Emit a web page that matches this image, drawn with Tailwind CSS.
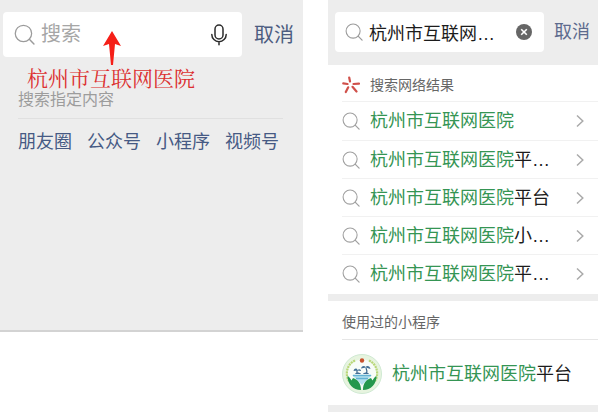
<!DOCTYPE html>
<html lang="zh-CN">
<head>
<meta charset="utf-8">
<meta name="viewport" content="width=device-width, initial-scale=1">
<title>搜索</title>
<script src="https://cdn.jsdelivr.net/npm/@tailwindcss/browser@4"></script>
</head>
<body class="bg-white font-['Liberation_Sans','Noto_Sans_CJK_SC',sans-serif] text-lg leading-6 text-[#1c1c1c]">
<svg class="hidden" aria-hidden="true">
  <symbol id="search" viewBox="0 0 20 20"><circle cx="9" cy="9" r="7.8" fill="none" stroke="currentColor" stroke-width="1.2"/><path d="M14.6 14.6 19 19" fill="none" stroke="currentColor" stroke-width="1.4" stroke-linecap="round"/></symbol>
  <symbol id="chevron" viewBox="0 0 8 14"><path d="M1 1.500 6.800 7 1 12.500" fill="none" stroke="currentColor" stroke-width="1.5"/></symbol>
</svg>
<main class="grid grid-cols-[minmax(0,303fr)_minmax(0,270fr)] items-start gap-x-[25px] pr-[2px]">
  <section class="border-b-2 border-[#d3d3d3] bg-[#ededed] pt-3 pb-[176px]">
    <form class="flex items-center pr-[9px] pl-[3px]">
      <div class="relative flex h-[45px] min-w-0 flex-1 items-center rounded bg-white pr-3 pl-[11px]">
        <svg class="size-[21px] shrink-0 text-[#9b9b9b]" aria-hidden="true"><use href="#search"/></svg>
        <input type="text" aria-label="搜索" placeholder="搜索" class="ml-[6px] h-8 min-w-0 flex-1 text-xl outline-none placeholder:text-[#a6a6a6]">
        <button type="button" aria-label="语音输入" class="shrink-0">
          <svg class="h-6 w-[22px]" viewBox="0 0 22 24" fill="none" stroke="#2b2b2b" stroke-width="1.5" stroke-linecap="round"><rect x="7" y="2" width="8" height="14" rx="4"/><path d="M3.8 11.5a7.2 7.2 0 0 0 14.4 0M11 18.8v3"/></svg>
        </button>
        <svg class="absolute top-[19px] left-[100px] h-[35px] w-[18px]" viewBox="0 0 18 35" aria-hidden="true"><path d="M9 0 18 15 12 13 10 34H8L6 13 0 15Z" fill="#f51f18"/></svg>
      </div>
      <button type="button" class="ml-3 shrink-0 text-xl text-[#4c5c80]">取消</button>
    </form>
    <p class="mt-2 pl-[27px] font-['Noto_Serif_CJK_SC','Noto_Sans_CJK_SC',serif] text-[21px] leading-6 text-[#dc3030]">杭州市互联网医院</p>
    <div class="pr-5 pl-[18px]">
      <h2 class="border-b border-[#e0e0e0] pt-[1px] pb-2 text-base leading-[20px] text-[#9c9c9c]">搜索指定内容</h2>
      <nav class="mt-[11px] flex gap-[15px] whitespace-nowrap text-[#465a84]">
        <a href="#moments">朋友圈</a>
        <a href="#accounts">公众号</a>
        <a href="#mini">小程序</a>
        <a href="#channels">视频号</a>
      </nav>
    </div>
  </section>

  <section>
    <form class="flex items-center bg-[#ededed] pt-3 pr-2 pb-[13px] pl-[7px]">
      <div class="flex h-10 min-w-0 flex-1 items-center rounded bg-white pr-3 pl-[10px]">
        <svg class="size-[18px] shrink-0 text-[#9b9b9b]" aria-hidden="true"><use href="#search"/></svg>
        <input type="text" aria-label="搜索内容" value="杭州市互联网…" class="ml-[6px] h-8 min-w-0 flex-1 outline-none">
        <button type="button" aria-label="清除" class="shrink-0">
          <svg class="size-4" viewBox="0 0 16 16"><circle cx="8" cy="8" r="8" fill="#666"/><path d="m5.2 5.2 5.6 5.6m0-5.6-5.6 5.6" stroke="#fff" stroke-width="1.6"/></svg>
        </button>
      </div>
      <button type="button" class="ml-[10px] shrink-0 text-[#5d6b8e]">取消</button>
    </form>
    <div class="pl-[14px]">
      <h2 class="flex h-[37px] items-center gap-[10px] border-b border-[#f1f1f1] pt-1 text-sm text-[#666]">
        <svg class="size-[18px]" viewBox="0 0 18 18" fill="none" stroke="#d0504a" stroke-width="2.2" stroke-linecap="round" aria-hidden="true"><path d="M7.200 1.500 8 5.500M1.300 7.300 5.500 8M11.500 8 17 7.600M6.200 11.300 3.800 16M10.500 10.800 14.500 15.500"/></svg>
        搜索网络结果
      </h2>
      <ul class="divide-y divide-[#f1f1f1] text-[#359554]">
        <li><a href="#r1" class="flex h-[38px] items-center pr-[14px]"><svg class="mr-[10px] size-[18px] shrink-0 text-[#a0a0a0]" aria-hidden="true"><use href="#search"/></svg><span class="flex-1 whitespace-nowrap">杭州市互联网医院</span><svg class="h-[14px] w-2 text-[#aaa]" aria-hidden="true"><use href="#chevron"/></svg></a></li>
        <li><a href="#r2" class="flex h-[37px] items-center pr-[14px]"><svg class="mr-[10px] size-[18px] shrink-0 text-[#a0a0a0]" aria-hidden="true"><use href="#search"/></svg><span class="flex-1 whitespace-nowrap">杭州市互联网医院<span class="text-[#1c1c1c]">平…</span></span><svg class="h-[14px] w-2 text-[#aaa]" aria-hidden="true"><use href="#chevron"/></svg></a></li>
        <li><a href="#r3" class="flex h-[37px] items-center pr-[14px]"><svg class="mr-[10px] size-[18px] shrink-0 text-[#a0a0a0]" aria-hidden="true"><use href="#search"/></svg><span class="flex-1 whitespace-nowrap">杭州市互联网医院<span class="text-[#1c1c1c]">平台</span></span><svg class="h-[14px] w-2 text-[#aaa]" aria-hidden="true"><use href="#chevron"/></svg></a></li>
        <li><a href="#r4" class="flex h-[37px] items-center pr-[14px]"><svg class="mr-[10px] size-[18px] shrink-0 text-[#a0a0a0]" aria-hidden="true"><use href="#search"/></svg><span class="flex-1 whitespace-nowrap">杭州市互联网医院<span class="text-[#1c1c1c]">小…</span></span><svg class="h-[14px] w-2 text-[#aaa]" aria-hidden="true"><use href="#chevron"/></svg></a></li>
        <li><a href="#r5" class="flex h-[37px] items-center pr-[14px]"><svg class="mr-[10px] size-[18px] shrink-0 text-[#a0a0a0]" aria-hidden="true"><use href="#search"/></svg><span class="flex-1 whitespace-nowrap">杭州市互联网医院<span class="text-[#1c1c1c]">平…</span></span><svg class="h-[14px] w-2 text-[#aaa]" aria-hidden="true"><use href="#chevron"/></svg></a></li>
      </ul>
    </div>
    <div class="mt-[2px] border-y-[7px] border-[#ededed] pl-[14px]">
      <h2 class="flex h-[39px] items-center border-b border-[#e6e6e6] pt-1 text-sm text-[#666]">使用过的小程序</h2>
      <a href="#app" class="flex h-[65px] items-center gap-[10px] whitespace-nowrap pt-[2px] text-[#359554]">
        <svg class="size-10 shrink-0" viewBox="0 0 40 40" fill="none" aria-hidden="true">
          <circle cx="20" cy="20" r="19.5" fill="#e7f4df" stroke="#cfe9d2"/>
          <circle cx="20" cy="20" r="14.5" fill="#f8fcf8"/>
          <path d="M13 6.5C3.500 11 3.500 22 7 27M27 6.500C36.500 11 36.500 22 33 27" stroke="#b9d778" stroke-width="2.200" stroke-dasharray="2 .8"/>
          <circle cx="20" cy="6.500" r="2.200" fill="#c8502c"/>
          <path d="M10 21h20L20 31Z" fill="#b5e0ed"/>
          <path d="M11 21.500h18M14 24.500h12" stroke="#62b2d3" stroke-width="1.300"/>
          <path d="M15 20v-4M24.500 20c.8-2 .5-4-.5-6" stroke="#346389" stroke-width="1.200"/>
          <path d="M11.500 17c1-3 3-3 4-1 2-1.500 3.500-.5 3.500 1l-3.500-.6-4 .6ZM19 14.500c1-3 3.500-3 4.500-1.500 2-2 4.500-.5 5 2l-4.500-1.600-5 1.100ZM13 20c1-2 5-2 6 0ZM21 20c1-2 5-2 6 0Z" fill="#426f96"/>
          <path d="M5.500 22c2 .5 3 3 4 4.500l1.500-2.500c5 2 8 5 8 12C11 36 5.500 30 5.500 22ZM34.500 22c-2 .5-3 3-4 4.500L29 24c-5 2-8 5-8 12 8 0 13.500-6 13.500-14Z" fill="#24974c"/>
        </svg>
        <span>杭州市互联网医院<span class="text-[#1c1c1c]">平台</span></span>
      </a>
    </div>
  </section>
</main>
</body>
</html>
